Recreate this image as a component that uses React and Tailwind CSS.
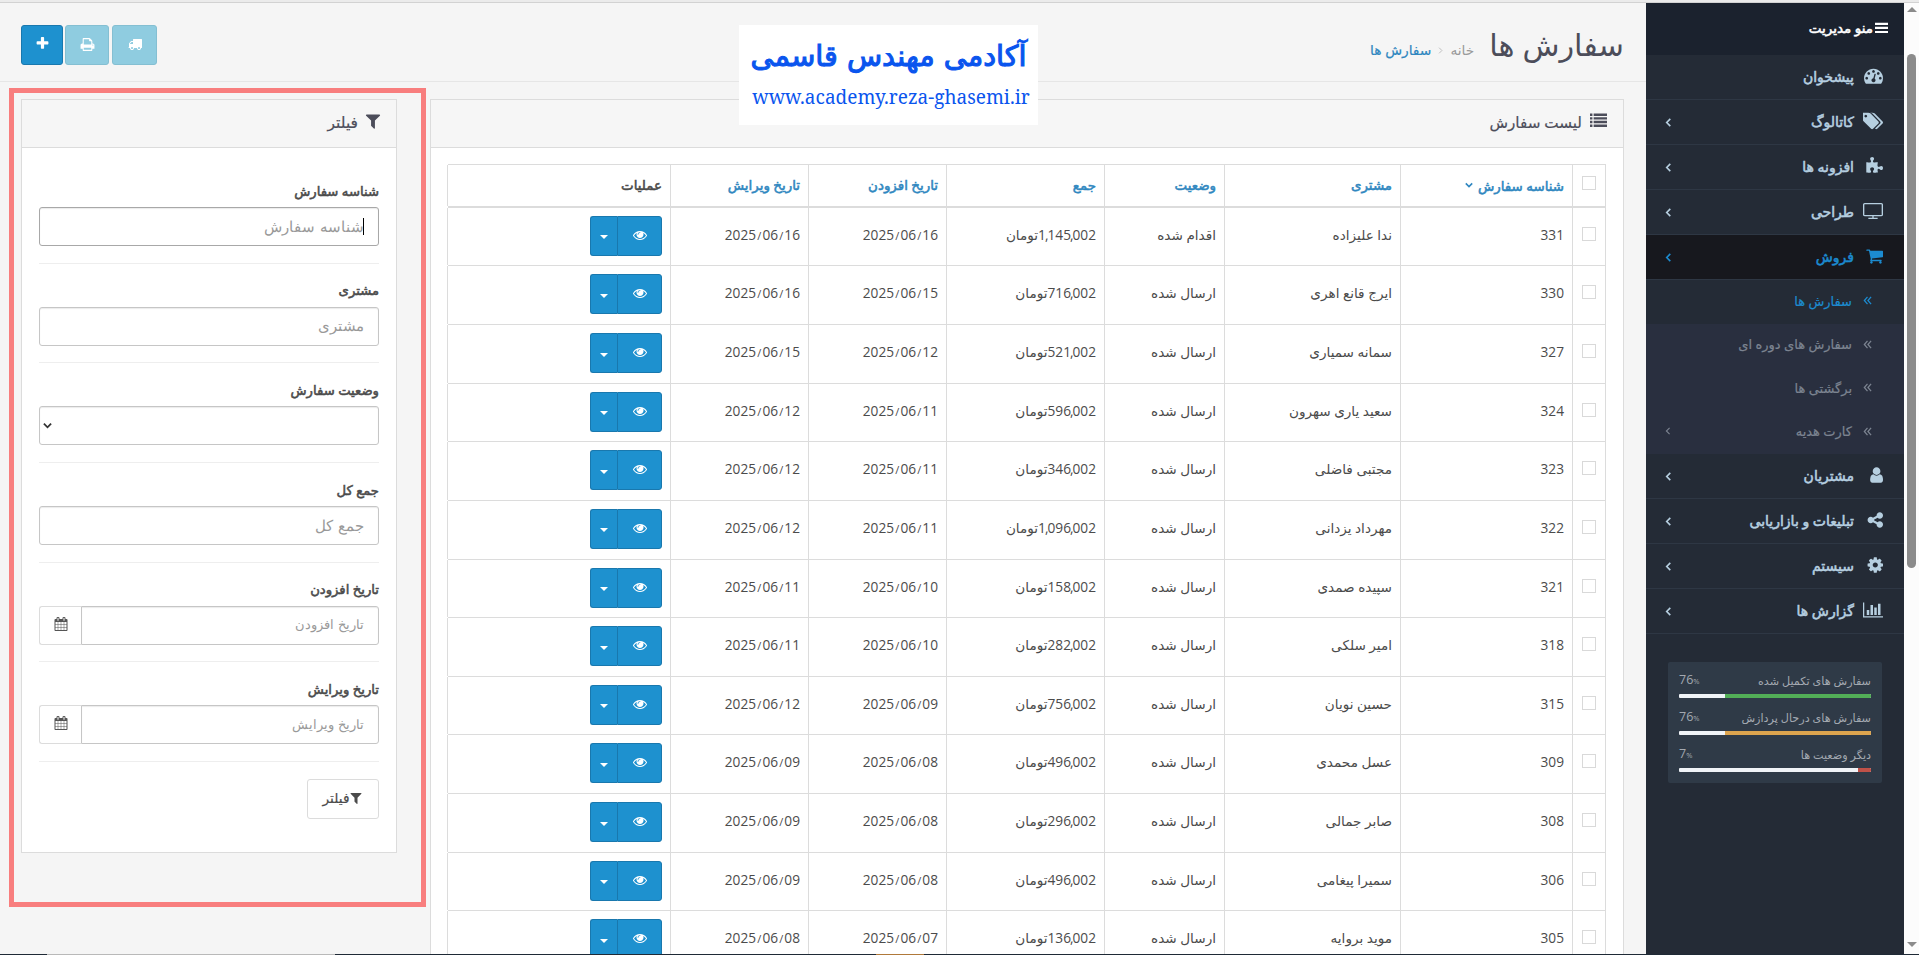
import React from "react";

const PATHS = {
  eye: [1792, "M1664 960q-152-236-381-353 61 104 61 225 0 185-131.5 316.5t-316.5 131.5-316.5-131.5-131.5-316.5q0-121 61-225-229 117-381 353 133 205 333.5 326.5t434.5 121.5 434.5-121.5 333.5-326.5zm-720-384q0-20-14-34t-34-14q-125 0-214.5 89.5t-89.5 214.5q0 20 14 34t34 14 34-14 14-34q0-86 61-147t147-61q20 0 34-14t14-34zm848 384q0 34-20 69-140 230-376.5 368.5t-499.5 138.5-499.5-139-376.5-368q-20-35-20-69t20-69q140-229 376.5-368t499.5-139 499.5 139 376.5 368q20 35 20 69z"],
  plus: [1792, "M1600 736v192q0 40-28 68t-68 28h-416v416q0 40-28 68t-68 28h-192q-40 0-68-28t-28-68v-416h-416q-40 0-68-28t-28-68v-192q0-40 28-68t68-28h416v-416q0-40 28-68t68-28h192q40 0 68 28t28 68v416h416q40 0 68 28t28 68z"],
  print: [1792, "M448 1536h896v-256h-896v256zm0-640h896v-384h-160q-40 0-68-28t-28-68v-160h-640v640zm1152 64q0-26-19-45t-45-19-45 19-19 45 19 45 45 19 45-19 19-45zm128 0v416q0 13-9.5 22.5t-22.5 9.5h-224v160q0 40-28 68t-68 28h-960q-40 0-68-28t-28-68v-160h-224q-13 0-22.5-9.5t-9.5-22.5v-416q0-79 56.5-135.5t135.5-56.5h64v-544q0-40 28-68t68-28h672q40 0 88 20t76 48l152 152q28 28 48 76t20 88v256h64q79 0 135.5 56.5t56.5 135.5z"],
  truck: [1792, "M640 1408q0-52-38-90t-90-38-90 38-38 90 38 90 90 38 90-38 38-90zm-384-512h384v-256h-158q-13 0-22 9l-195 195q-9 9-9 22v30zm1280 512q0-52-38-90t-90-38-90 38-38 90 38 90 90 38 90-38 38-90zm256-1088v1024q0 15-4 26.5t-13.5 18.5-16.5 11.5-23.5 6-22.5 2-25.5 0-22.5-.5q0 106-75 181t-181 75-181-75-75-181h-384q0 106-75 181t-181 75-181-75-75-181h-64q-3 0-22.5.5t-25.5 0-22.5-2-23.5-6-16.5-11.5-13.5-18.5-4-26.5q0-26 19-45t45-19v-320q0-8-.5-35t0-38 2.5-34.5 6.5-37 14-30.5 22.5-30l198-198q19-19 50.5-32t58.5-13h160v-192q0-26 19-45t45-19h1024q26 0 45 19t19 45z"],
  filter: [1792, "M1595 295q17 41-14 70l-493 493v742q0 42-39 59-13 5-25 5-27 0-45-19l-256-256q-19-19-19-45v-486l-493-493q-31-29-14-70 17-39 59-39h1280q42 0 59 39z"],
  calendar: [1792, "M192 1664h288v-288h-288v288zm352 0h320v-288h-320v288zm-352-352h288v-320h-288v320zm352 0h320v-320h-320v320zm-352-384h288v-288h-288v288zm736 736h320v-288h-320v288zm-384-736h320v-288h-320v288zm768 736h288v-288h-288v288zm-384-352h320v-320h-320v320zm-352-864v-288q0-13-9.5-22.5t-22.5-9.5h-64q-13 0-22.5 9.5t-9.5 22.5v288q0 13 9.5 22.5t22.5 9.5h64q13 0 22.5-9.5t9.5-22.5zm736 864h288v-320h-288v320zm-384-384h320v-288h-320v288zm384 0h288v-288h-288v288zm32-480v-288q0-13-9.5-22.5t-22.5-9.5h-64q-13 0-22.5 9.5t-9.5 22.5v288q0 13 9.5 22.5t22.5 9.5h64q13 0 22.5-9.5t9.5-22.5zm384-64v1280q0 52-38 90t-90 38h-1408q-52 0-90-38t-38-90v-1280q0-52 38-90t90-38h128v-96q0-66 47-113t113-47h64q66 0 113 47t47 113v96h384v-96q0-66 47-113t113-47h64q66 0 113 47t47 113v96h128q52 0 90 38t38 90z"],
  cart: [1728, "M704 1536q0 52-38 90t-90 38-90-38-38-90 38-90 90-38 90 38 38 90zm896 0q0 52-38 90t-90 38-90-38-38-90 38-90 90-38 90 38 38 90zm128-1088v512q0 24-16.5 42.5t-40.5 21.5l-1044 122q13 60 13 70 0 16-24 64h920q26 0 45 19t19 45-19 45-45 19h-1024q-26 0-45-19t-19-45q0-11 8-31.5t16-36 21.5-40 15.5-29.5l-177-823h-204q-26 0-45-19t-19-45 19-45 45-19h256q16 0 28.5 6.5t19.5 15.5 13 24.5 8 26 5.5 29.5 4.5 26h1201q26 0 45 19t19 45z"],
  user: [1536, "M1536 1399q0 109-62.5 187t-150.5 78h-854q-88 0-150.5-78t-62.5-187q0-85 8.5-160.5t31.5-152 58.5-131 94-89 134.5-34.5q131 128 313 128t313-128q76 0 134.5 34.5t94 89 58.5 131 31.5 152 8.5 160.5zm-256-887q0 159-112.5 271.5t-271.5 112.5-271.5-112.5-112.5-271.5 112.5-271.5 271.5-112.5 271.5 112.5 112.5 271.5z"],
  share: [1664, "M1344 1024q133 0 226.5 93.5t93.5 226.5-93.5 226.5-226.5 93.5-226.5-93.5-93.5-226.5q0-12 2-34l-360-180q-92 86-218 86-133 0-226.5-93.5t-93.5-226.5 93.5-226.5 226.5-93.5q126 0 218 86l360-180q-2-22-2-34 0-133 93.5-226.5t226.5-93.5 226.5 93.5 93.5 226.5-93.5 226.5-226.5 93.5q-126 0-218-86l-360 180q2 22 2 34t-2 34l360 180q92-86 218-86z"],
  cog: [1664, "M1152 896q0-106-75-181t-181-75-181 75-75 181 75 181 181 75 181-75 75-181zm512-109v222q0 12-8 23t-20 13l-185 28q-19 54-39 91 35 50 107 138 10 12 10 25t-9 23q-27 37-99 108t-94 71q-12 0-26-9l-138-108q-44 23-91 38-16 136-29 186-7 28-36 28h-222q-14 0-24.5-8.5t-11.5-21.5l-28-184q-49-16-90-37l-141 107q-10 9-25 9-14 0-25-11-126-114-165-168-7-10-7-23 0-12 8-23 15-21 51-66.5t54-70.5q-27-50-41-99l-183-27q-13-2-21-12.5t-8-23.5v-222q0-12 8-23t19-13l186-28q14-46 39-92-40-57-107-138-10-12-10-24 0-10 9-23 26-36 98.5-107.5t94.5-71.5q13 0 26 10l138 107q44-23 91-38 16-136 29-186 7-28 36-28h222q14 0 24.5 8.5t11.5 21.5l28 184q49 16 90 37l142-107q9-9 24-9 13 0 25 10 129 119 165 170 7 8 7 22 0 12-8 23-15 21-51 66.5t-54 70.5q26 50 41 98l183 28q13 2 21 12.5t8 23.5z"],
  gauge: [1792, "M384 1152q0-53-37.5-90.5t-90.5-37.5-90.5 37.5-37.5 90.5 37.5 90.5 90.5 37.5 90.5-37.5 37.5-90.5zm192-448q0-53-37.5-90.5t-90.5-37.5-90.5 37.5-37.5 90.5 37.5 90.5 90.5 37.5 90.5-37.5 37.5-90.5zm428 481l101-382q6-26-7.5-48.5t-38.5-29.5-48 6.5-30 39.5l-101 382q-60 5-107 43.5t-63 98.5q-20 77 20 146t117 89 146-20 89-117q16-60-6-117t-72-91zm660-33q0-53-37.5-90.5t-90.5-37.5-90.5 37.5-37.5 90.5 37.5 90.5 90.5 37.5 90.5-37.5 37.5-90.5zm-640-640q0-53-37.5-90.5t-90.5-37.5-90.5 37.5-37.5 90.5 37.5 90.5 90.5 37.5 90.5-37.5 37.5-90.5zm448 192q0-53-37.5-90.5t-90.5-37.5-90.5 37.5-37.5 90.5 37.5 90.5 90.5 37.5 90.5-37.5 37.5-90.5zm320 448q0 261-141 483-19 29-54 29h-1402q-35 0-54-29-141-221-141-483 0-182 71-348t191-286 286-191 348-71 348 71 286 191 191 286 71 348z"],
  tags: [1835, "M384 448q0-53-37.5-90.5t-90.5-37.5-90.5 37.5-37.5 90.5 37.5 90.5 90.5 37.5 90.5-37.5 37.5-90.5zm1067 576q0 53-37 90l-491 492q-39 37-91 37-53 0-90-37l-715-716q-38-37-64.5-101t-26.5-117v-416q0-52 38-90t90-38h416q53 0 117 26.5t102 64.5l715 714q37 39 37 91zm384 0q0 53-37 90l-491 492q-39 37-91 37-36 0-59-14t-53-45l470-470q37-37 37-90 0-52-37-91l-715-714q-38-38-102-64.5t-117-26.5h224q53 0 117 26.5t102 64.5l715 714q37 39 37 91z"],
  puzzle: [1755, "M1755 1099q0 81-44.5 135t-123.5 54q-41 0-77.5-17.5t-59-38-56.5-38-71-17.5q-110 0-110 124 0 39 16 115t15 115v5q-22 0-33 1-34 3-97.5 11.5t-115.5 13.5-98 5q-61 0-103-26.5t-42-83.5q0-37 17.5-71t38-56.5 38-59 17.5-77.5q0-79-54-123.5t-135-44.5q-84 0-143 45.5t-59 127.5q0 43 15 83t33.5 64.5 33.5 53 15 50.5q0 45-46 89-37 35-117 35-95 0-245-24-9-2-27.5-4t-27.5-4l-13-2q-1 0-3-1-2 0-2-1v-1024q2 1 17.5 3.5t34 5 21.5 3.5q150 24 245 24 80 0 117-35 46-44 46-89 0-22-15-50.5t-33.5-53-33.5-64.5-15-83q0-82 59-127.5t144-45.5q80 0 134 44.5t54 123.5q0 41-17.5 77.5t-38 59-38 56.5-17.5 71q0 57 42 83.5t103 26.5q64 0 180-15t163-17v2q-1 2-3.5 17.5t-5 34-3.5 21.5q-24 150-24 245 0 80 35 117 44 46 89 46 22 0 50.5-15t53-33.5 64.5-33.5 83-15q82 0 127.5 59t45.5 143z"],
  screen: [1920, "M1792 1248v-960q0-13-9.5-22.5t-22.5-9.5h-1600q-13 0-22.5 9.5t-9.5 22.5v960q0 13 9.5 22.5t22.5 9.5h1600q13 0 22.5-9.5t9.5-22.5zm128-960v960q0 66-47 113t-113 47h-736v128h352q14 0 23 9t9 23v64q0 14-9 23t-23 9h-832q-14 0-23-9t-9-23v-64q0-14 9-23t23-9h352v-128h-736q-66 0-113-47t-47-113v-960q0-66 47-113t113-47h1600q66 0 113 47t47 113z"],
  chart: [2048, "M640 896v512h-256v-512h256zm384-512v1024h-256v-1024h256zm1024 1152v128h-2048v-1536h128v1408h1920zm-640-896v768h-256v-768h256zm384-384v1152h-256v-1152h256z"],
  list: [1792, "M0 160h256v256h-256zM384 160h1408v256h-1408zM0 544h256v256h-256zM384 544h1408v256h-1408zM0 928h256v256h-256zM384 928h1408v256h-1408zM0 1312h256v256h-256zM384 1312h1408v256h-1408z"],
  bars: [1664, "M0 230h1664v270h-1664zM0 750h1664v270h-1664zM0 1270h1664v270h-1664z"],
};

function Icon({ name, className }) {
  const [w, d] = PATHS[name];
  return (
    <svg
      viewBox={`0 0 ${w} 1792`}
      preserveAspectRatio="xMaxYMid meet"
      className={`shrink-0 fill-current ${className}`}
      aria-hidden="true"
    >
      <path d={d} />
    </svg>
  );
}

function Chevron({ d, className }) {
  return (
    <svg viewBox="0 0 10 10" className={`shrink-0 fill-none stroke-current ${className}`} aria-hidden="true">
      <path d={d} />
    </svg>
  );
}
const LEFT = "M7 1L3 5L7 9";
const DOWN = "M1 3L5 7L9 3";
const DOUBLE = "M5 1L1.5 5L5 9M9 1L5.5 5L9 9";

// Heavier strokes on the regular face keep the compact letter widths.
const STRONG = "[-webkit-text-stroke:0.55px_currentColor]";

function MenuItem({ icon, iconClass, label, active, leaf }) {
  return (
    <div
      className={`flex h-[45px] items-center border-b border-[#2e3744] pr-[21px] pl-[19px] ${
        active ? "bg-[#17181e] text-[#1c8bd0]" : "text-[#b6cfe0]"
      }`}
    >
      <span className="flex w-[22px] justify-start">
        <Icon name={icon} className={`mb-[3px] ${iconClass}`} />
      </span>
      <span className={`mr-[7px] text-[14px] whitespace-nowrap ${STRONG}`}>{label}</span>
      {!leaf && <Chevron d={LEFT} className="mr-auto -ml-px size-[9px] stroke-[1.8]" />}
    </div>
  );
}

function SubItem({ label, active, more }) {
  return (
    <div
      className={`flex h-[43.5px] items-center pr-[32px] pb-[2px] pl-[19px] ${
        active ? "bg-[#242b36] text-[#1c8bd0]" : "text-[#7c8491]"
      }`}
    >
      <Chevron d={DOUBLE} className="size-[9px] stroke-[1.4]" />
      <span className="mr-[11px] text-[13px] whitespace-nowrap [-webkit-text-stroke:0.2px_currentColor]">{label}</span>
      {more && <Chevron d={LEFT} className="mr-auto -ml-px size-[8px] stroke-[1.4]" />}
    </div>
  );
}

function Stat({ label, value, bar }) {
  return (
    <div className="flex h-[37px] flex-col">
      <div className="flex h-[26px] items-center justify-between pt-[2px] text-[#a3a9b1]">
        <span className="text-[11.2px] whitespace-nowrap">{label}</span>
        <span dir="ltr" className="pb-[1px] text-[12.5px]">
          {value}
          <span className="text-[7.5px]">%</span>
        </span>
      </div>
      <div className="mt-[1px] flex h-[4px] overflow-hidden rounded-[1px] bg-[#f0f3f7]">
        <div className={bar} style={{ width: `${value}%` }} />
      </div>
    </div>
  );
}

function Sidebar() {
  return (
    <aside className="flex w-[258px] shrink-0 flex-col bg-[#242b36] pt-[3px]">
      <div className="flex h-[52px] items-center bg-[#1b222e] pr-[16px] pb-[2px] text-white">
        <Icon name="bars" className="h-[14px] w-[13px]" />
        <span className={`mr-[2px] text-[13.5px] whitespace-nowrap ${STRONG}`}>منو مدیریت</span>
      </div>
      <MenuItem icon="gauge" iconClass="size-[19px]" label="پیشخوان" leaf />
      <MenuItem icon="tags" iconClass="size-[20px]" label="کاتالوگ" />
      <MenuItem icon="puzzle" iconClass="size-[18px]" label="افزونه ها" />
      <MenuItem icon="screen" iconClass="size-[20px]" label="طراحی" />
      <MenuItem icon="cart" iconClass="size-[18px]" label="فروش" active />
      <div className="bg-[#292f3f]">
        <SubItem label="سفارش ها" active />
        <SubItem label="سفارش های دوره ای" />
        <SubItem label="برگشتی ها" />
        <SubItem label="کارت هدیه" more />
      </div>
      <MenuItem icon="user" iconClass="size-[18px]" label="مشتریان" />
      <MenuItem icon="share" iconClass="size-[18px]" label="تبلیغات و بازاریابی" />
      <MenuItem icon="cog" iconClass="size-[18px]" label="سیستم" />
      <MenuItem icon="chart" iconClass="size-[20px]" label="گزارش ها" />
      <div className="mx-[22px] mt-[28px] h-[121px] rounded-[2px] bg-[#2f3a47] px-[11px] pt-[5px]">
        <Stat label="سفارش های تکمیل شده" value={76} bar="bg-[#52ae57]" />
        <Stat label="سفارش های درحال پردازش" value={76} bar="bg-[#dda44e]" />
        <Stat label="دیگر وضعیت ها" value={7} bar="bg-[#bf5148]" />
      </div>
    </aside>
  );
}

const ORDERS = [
  ["331", "ندا علیزاده", "اقدام شده", "1,145,002", "2025/06/16", "2025/06/16"],
  ["330", "ایرج قانع اهری", "ارسال شده", "716,002", "2025/06/15", "2025/06/16"],
  ["327", "سمانه سمیاری", "ارسال شده", "521,002", "2025/06/12", "2025/06/15"],
  ["324", "سعید یاری سهرون", "ارسال شده", "596,002", "2025/06/11", "2025/06/12"],
  ["323", "مجتبی فاضلی", "ارسال شده", "346,002", "2025/06/11", "2025/06/12"],
  ["322", "مهرداد یزدانی", "ارسال شده", "1,096,002", "2025/06/11", "2025/06/12"],
  ["321", "سپیده صمدی", "ارسال شده", "158,002", "2025/06/10", "2025/06/11"],
  ["318", "امیر سلکی", "ارسال شده", "282,002", "2025/06/10", "2025/06/11"],
  ["315", "حسین نویان", "ارسال شده", "756,002", "2025/06/09", "2025/06/12"],
  ["309", "عسل محمدی", "ارسال شده", "496,002", "2025/06/08", "2025/06/09"],
  ["308", "صابر جمالی", "ارسال شده", "296,002", "2025/06/08", "2025/06/09"],
  ["306", "سمیرا پیغامی", "ارسال شده", "496,002", "2025/06/08", "2025/06/09"],
  ["305", "موید بروایه", "ارسال شده", "136,002", "2025/06/07", "2025/06/08"],
];

const COLS = "grid grid-cols-[33px_172px_176px_120px_158px_138px_138px_223px]";
const CELL = "border-l border-[#dcdcdc] px-[8px] whitespace-nowrap";

function Check() {
  return <span className="mr-[1px] block size-[14px] border border-[#d9d9d9] bg-white" />;
}

function Num({ children }) {
  return (
    <span dir="ltr" className="text-[13.7px]">
      {children.split(/([,/])/).map((part, i) =>
        part === "," ? (
          <span key={i} className="-mr-[1px] -ml-[1px]">,</span>
        ) : part === "/" ? (
          <span key={i} className="inline-block w-[6.3px] text-center text-[11px]">/</span>
        ) : (
          part
        )
      )}
    </span>
  );
}

function OrderRow({ order }) {
  const [id, customer, status, total, added, modified] = order;
  return (
    <div className={`${COLS} h-[58.64px] border-b border-[#dcdcdc] text-[13.6px] text-[#4b4b4b]`}>
      <div className={`${CELL} pt-[19px]`}>
        <Check />
      </div>
      <div className={`${CELL} pt-[18px]`}>
        <Num>{id}</Num>
      </div>
      <div className={`${CELL} pt-[18px]`}>{customer}</div>
      <div className={`${CELL} pt-[18px]`}>{status}</div>
      <div className={`${CELL} pt-[18px]`}>
        <Num>{total}</Num>
        <span>تومان</span>
      </div>
      <div className={`${CELL} pt-[18px]`}>
        <Num>{added}</Num>
      </div>
      <div className={`${CELL} pt-[18px]`}>
        <Num>{modified}</Num>
      </div>
      <div className={`${CELL} flex pt-[8px]`}>
        <div className="flex h-[40px] w-[45px] items-center justify-center rounded-r-[3px] border border-[#1978ae] bg-[#1e91cf] text-white">
          <Icon name="eye" className="mb-[2px] ml-px size-[14px]" />
        </div>
        <div className="flex h-[40px] w-[27px] items-center justify-center rounded-l-[3px] border border-r-0 border-[#1978ae] bg-[#1e91cf]">
          <span className="mt-[3px] border-x-[4px] border-t-[4px] border-x-transparent border-t-white" />
        </div>
      </div>
    </div>
  );
}

function OrderPanel() {
  return (
    <section className="flex w-[1194px] flex-col border border-b-0 border-[#dcdcdc] bg-white">
      <div className="flex h-[48px] items-center border-b border-[#dcdcdc] bg-[#f6f6f6] pr-[16px] text-[#4c4d5a]">
        <Icon name="list" className="mb-[6px] h-[17px] w-[17px]" />
        <span className="mr-[8px] mb-[4px] text-[15.2px] [-webkit-text-stroke:0.2px_currentColor]">لیست سفارش</span>
      </div>
      <div className="mx-[17px] mt-[16px] border-t border-r border-[#dcdcdc]">
        <div className={`${COLS} h-[42.8px] border-b-2 border-[#dcdcdc] text-[13.4px] text-[#2f87c0] ${STRONG}`}>
          <div className={`${CELL} pt-[11px]`}>
            <Check />
          </div>
          <div className={`${CELL} flex gap-[5px] pt-[12px]`}>
            شناسه سفارش
            <Chevron d={DOWN} className="mt-[4px] size-[8px] stroke-[2]" />
          </div>
          <div className={`${CELL} pt-[11px]`}>مشتری</div>
          <div className={`${CELL} pt-[11px]`}>وضعیت</div>
          <div className={`${CELL} pt-[11px]`}>جمع</div>
          <div className={`${CELL} pt-[11px]`}>تاریخ افزودن</div>
          <div className={`${CELL} pt-[11px]`}>تاریخ ویرایش</div>
          <div className={`${CELL} pt-[11px] text-[#4b4b4b]`}>عملیات</div>
        </div>
        {ORDERS.map((o) => (
          <OrderRow key={o[0]} order={o} />
        ))}
      </div>
    </section>
  );
}

function Field({ label, kind, focused }) {
  const box = focused ? "border-[#a8a8a8]" : "border-[#c6c6c6]";
  return (
    <div className="flex h-[99.7px] shrink-0 flex-col border-b border-[#eeeeee]">
      <span className={`mt-[14px] mb-[4px] flex h-[25px] items-center text-[13.2px] text-[#4b4b4b] ${STRONG}`}>
        {label}
      </span>
      <div className="flex h-[39px]">
        <div
          className={`flex flex-1 items-center border bg-white text-[#999] shadow-[inset_0_1px_1px_rgba(0,0,0,0.08)] ${box} ${
            kind === "date" ? "rounded-r-[3px] pr-[14px] text-[13px]" : "rounded-[3px] pr-[14px] text-[15px]"
          }`}
        >
          {focused && <span className="-ml-px h-[17px] w-px bg-black" />}
          {kind === "select" ? (
            <Chevron d={DOWN} className="mr-auto ml-[3px] size-[9px] stroke-[2] text-[#333]" />
          ) : (
            <span className="font-['DejaVu_Sans',sans-serif] font-light">{label}</span>
          )}
        </div>
        {kind === "date" && (
          <div className="flex w-[42px] items-center justify-center rounded-l-[3px] border border-r-0 border-[#dcdcdc] pb-[3px] text-[#555]">
            <Icon name="calendar" className="ml-px size-[14px]" />
          </div>
        )}
      </div>
    </div>
  );
}

function FilterPanel() {
  return (
    <section className="flex h-[754px] w-[376px] flex-col border border-[#dcdcdc] bg-white">
      <div className="flex h-[48px] shrink-0 items-center border-b border-[#dcdcdc] bg-[#f6f6f6] pr-[14px] text-[#4c4d5a]">
        <Icon name="filter" className="mb-[5px] size-[18px]" />
        <span className="mr-[6px] mb-[4px] text-[15.5px] [-webkit-text-stroke:0.2px_currentColor]">فیلتر</span>
      </div>
      <div className="flex flex-col px-[17px] pt-[16px]">
        <Field label="شناسه سفارش" focused />
        <Field label="مشتری" />
        <Field label="وضعیت سفارش" kind="select" />
        <Field label="جمع کل" />
        <Field label="تاریخ افزودن" kind="date" />
        <Field label="تاریخ ویرایش" kind="date" />
        <div className="mt-[17px] flex h-[40px] w-[72px] items-center justify-center rounded-[3px] border border-[#dcdcdc] text-[13.7px] text-[#4b4b4b]">
          <Icon name="filter" className="mb-[2px] size-[14px]" />
          <span className="mb-[2px] [-webkit-text-stroke:0.2px_currentColor]">فیلتر</span>
        </div>
      </div>
    </section>
  );
}

function PageHeader() {
  return (
    <header className="flex h-[79px] shrink-0 items-start border-b border-[#e6e6e6] pr-[22px] pl-[21px]">
      <h1 className="mt-[20px] text-[30.3px] leading-[44px] whitespace-nowrap text-[#4c4d5a]">سفارش ها</h1>
      <div className="mt-[36px] mr-[15px] flex items-center gap-[6px] text-[13.8px] leading-[22px] whitespace-nowrap">
        <span className="text-[#999]">خانه</span>
        <Chevron d="M3 1L7 5L3 9" className="size-[7px] stroke-[1.3] text-[#bbb]" />
        <span className="text-[#2f87c0] [-webkit-text-stroke:0.2px_currentColor]">سفارش ها</span>
      </div>
      <div className="mt-[22px] mr-auto flex text-white">
        <div className="ml-[3px] flex h-[40px] w-[45px] items-center justify-center rounded-[3px] border border-[#84bfd2] bg-[#8fcce0]">
          <Icon name="truck" className="mb-[2px] size-[14px]" />
        </div>
        <div className="ml-[2px] flex h-[40px] w-[44px] items-center justify-center rounded-[3px] border border-[#84bfd2] bg-[#8fcce0]">
          <Icon name="print" className="mb-[2px] size-[15px]" />
        </div>
        <div className="flex h-[40px] w-[42px] items-center justify-center rounded-[3px] border border-[#1978ae] bg-[#1e91cf]">
          <Icon name="plus" className="mb-[3px] size-[15px]" />
        </div>
      </div>
    </header>
  );
}

export default function App() {
  return (
    <div
      dir="rtl"
      className="relative flex h-[955px] w-[1919px] overflow-hidden bg-[#f5f5f5] font-['Open_Sans','DejaVu_Sans',sans-serif] leading-[18px]"
    >
      <div className="flex w-[15px] shrink-0 flex-col items-center bg-[#fcfcfc] pt-[7px] pb-[8px]">
        <span className="border-x-[5px] border-b-[5px] border-x-transparent border-b-[#8b8b8b]" />
        <span className="mt-[42px] h-[514px] w-[9px] rounded-full bg-[#8b8b8b]" />
        <span className="mt-auto border-x-[5px] border-t-[5px] border-x-transparent border-t-[#8b8b8b]" />
      </div>
      <Sidebar />
      <main className="flex min-w-0 flex-1 flex-col pt-[3px]">
        <PageHeader />
        <div className="flex items-start justify-between pt-[17px] pr-[22px] pl-[21px]">
          <OrderPanel />
          <FilterPanel />
        </div>
      </main>

      <div className="absolute inset-x-0 top-0 h-[3px] border-b border-[#d2d2d2] bg-[#ebebeb]" />
      <div className="absolute top-[88px] left-[9px] h-[819px] w-[417px] border-[5px] border-[#f87e7e]" />
      <div className="absolute top-[25px] left-[739px] flex h-[100px] w-[299px] flex-col items-center bg-white whitespace-nowrap text-[#0a55ee]">
        <span className="mt-[11px] font-['DejaVu_Sans',sans-serif] text-[28.8px] leading-[40px] [-webkit-text-stroke:1.1px_currentColor]">
          آکادمی مهندس قاسمی
        </span>
        <span dir="ltr" className="mt-[9px] ml-[5px] font-['Noto_Serif','DejaVu_Serif',serif] text-[19px] leading-[24px]">
          www.academy.reza-ghasemi.ir
        </span>
      </div>
      <div dir="ltr" className="absolute inset-x-0 bottom-0 flex h-px bg-[#1f2a36]">
        <span className="ml-[47px] w-[288px] bg-[#b9b9b9]" />
        <span className="ml-[541px] w-[48px] bg-[#b0793a]" />
      </div>
    </div>
  );
}
